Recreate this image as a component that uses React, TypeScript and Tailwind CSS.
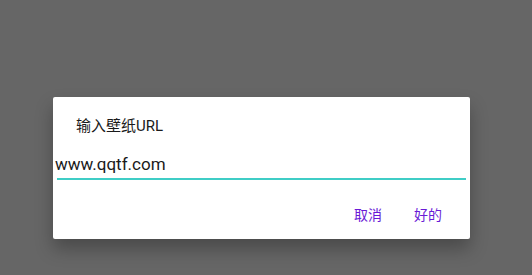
import React from "react";

export default function App() {
  return (
    <div
      className="w-[532px] h-[275px] bg-[#666666] pl-[53px] pt-[97px] overflow-hidden"
      style={{ fontFamily: 'Roboto, "Noto Sans CJK SC", sans-serif' }}
    >
      <div className="w-[417px] h-[142px] bg-white rounded-[2px] shadow-[0_10px_18px_rgba(0,0,0,0.28)] flex flex-col">
        <div className="pl-[23px] pt-[19px] h-[20px] box-content text-[15px] leading-[20px] text-[#1a1a1a]">
          输入壁纸URL
        </div>
        <div className="mt-[18px] pl-[2px] text-[17px] leading-[20px] text-[#1a1a1a]">
          www.qqtf.com
        </div>
        <div className="mx-[4px] mt-[4px] h-[2px] bg-[#3fcdc6]" />
        <div className="flex justify-end gap-[32px] pr-[28px] mt-[26px] text-[14px] leading-[18px] text-[#6a1ad6]">
          <span>取消</span>
          <span>好的</span>
        </div>
      </div>
    </div>
  );
}
